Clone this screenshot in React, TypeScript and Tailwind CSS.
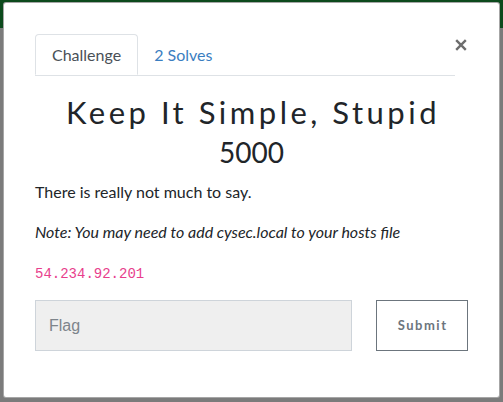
import React from "react";

export default function App() {
  return (
    <div className="w-[503px] h-[402px] overflow-hidden bg-[linear-gradient(to_bottom,#0c4a1c_0,#0c4a1c_28px,#7b7b7b_28px)] pt-[2px] pl-[3px]">
      <div className="w-[497px] h-[396px] bg-white border border-[rgba(0,0,0,0.35)] rounded-[3px] px-[31px] pt-[31px] font-['Lato',sans-serif] text-[#212529]">
        <div className="flex items-start">
          <div className="flex w-[420px] border-b border-[#dee2e6]">
            <div className="h-[41px] px-4 flex items-center border border-[#dee2e6] border-b-white -mb-px rounded-t-[4px] bg-white text-[16px] text-[#495057]">
              Challenge
            </div>
            <div className="h-[41px] px-4 flex items-center text-[16px] text-[#3a7ec1]">
              2 Solves
            </div>
          </div>
          <div className="ml-auto mt-[5px] mr-[1px]">
            <svg width="12" height="12" viewBox="0 0 12 12">
              <path d="M1.2 1.2 L10.8 10.8 M10.8 1.2 L1.2 10.8" stroke="#6d6d6d" strokeWidth="2.4" strokeLinecap="butt" />
            </svg>
          </div>
        </div>
        <div className="text-center mt-[17px] pl-[3px] text-[31px] leading-[38px] tracking-[3.5px] font-['Lato',sans-serif] font-normal text-[#212529]">
          Keep It Simple, Stupid
        </div>
        <div className="text-center text-[28px] leading-[36px] text-[#212529] mt-[3px]">
          5000
        </div>
        <p className="mt-[10px] text-[16px] leading-[24px]">There is really not much to say.</p>
        <p className="mt-[16px] text-[16px] leading-[24px] italic">Note: You may need to add cysec.local to your hosts file</p>
        <p className="mt-[20px] text-[14px] leading-[20px] font-['Liberation_Mono',monospace] text-[#e83e8c]">54.234.92.201</p>
        <div className="flex mt-[16px]">
          <div className="w-[318px] h-[51px] bg-[#efefef] border border-[#ced4da] flex items-center pl-[13px] font-['Liberation_Sans',sans-serif] text-[16px] text-[#7d848b]">
            Flag
          </div>
          <div className="ml-[24px] w-[92px] h-[51px] border border-[#6c757d] flex items-center justify-center pl-[1px] text-[13px] font-bold tracking-[1.5px] text-[#6c757d]">
            Submit
          </div>
        </div>
      </div>
    </div>
  );
}
